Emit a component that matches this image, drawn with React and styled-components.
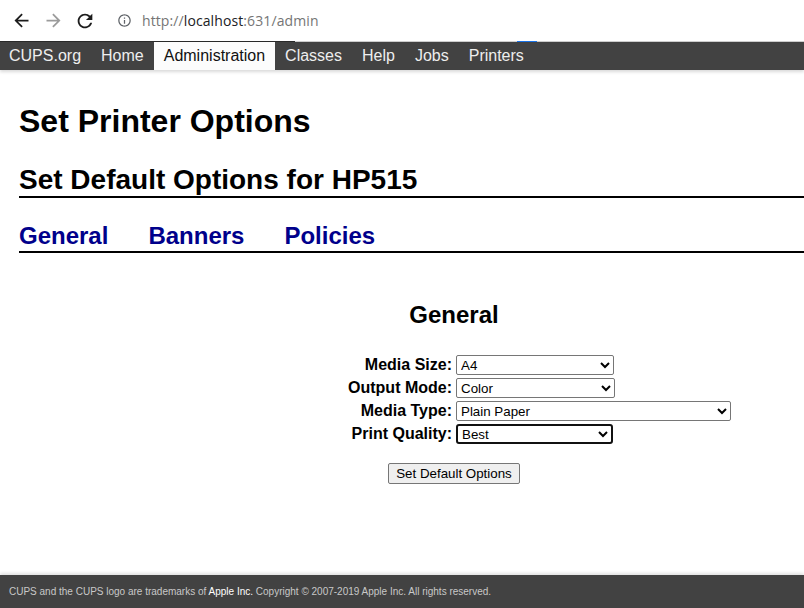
import React from "react";
import styled, { createGlobalStyle } from "styled-components";
import { MdArrowBack, MdArrowForward, MdRefresh, MdInfoOutline } from "react-icons/md";

const GlobalStyle = createGlobalStyle`
  html, body { margin: 0; padding: 0; background: #fff; }
  body { font-family: "Liberation Sans", Arial, sans-serif; color: #000; }
`;

const Page = styled.div`
  display: flex;
  flex-direction: column;
  min-height: 100vh;
`;

const Toolbar = styled.div`
  display: flex;
  align-items: center;
  height: 41px;
  padding-left: 5px;
  background: #fff;
`;

const IconSlot = styled.div`
  width: 32px;
  display: flex;
  justify-content: center;
  align-items: center;
  color: ${(p) => (p.$muted ? "#9b9b9b" : "#1c1c1c")};
`;

const InfoSlot = styled.div`
  display: flex;
  align-items: center;
  margin-left: 16px;
  color: #5f6368;
`;

const Url = styled.div`
  margin-left: 10px;
  font-family: "Open Sans", "Noto Sans", sans-serif;
  font-size: 14px;
  color: #757575;
  letter-spacing: 0.1px;
`;

const Host = styled.span`
  color: #202124;
`;

const LoadBar = styled.div`
  height: 1px;
  background: linear-gradient(
    to right,
    #2a2a2a 0 295px,
    #cfcfcf 295px 517px,
    #1a73e8 517px 537px,
    #cfcfcf 537px
  );
`;

const Nav = styled.nav`
  display: flex;
  height: 28px;
  background: #424242;
  box-shadow: 0 2px 3px rgba(0, 0, 0, 0.15);
  position: relative;
  z-index: 1;
`;

const NavItem = styled.a`
  padding: 0 10px;
  line-height: 28px;
  font-size: 16px;
  text-decoration: none;
  color: ${(p) => (p.$active ? "#111" : "#eeeeee")};
  background: ${(p) => (p.$active ? "#fcfcfc" : "transparent")};
  &:first-child { margin-left: -1px; }
`;

const Main = styled.main`
  flex: 1;
  padding-left: 19px;
`;

const Title = styled.h1`
  margin: 33px 0 0;
  font-size: 32px;
  line-height: 37px;
  font-weight: bold;
`;

const Subtitle = styled.h2`
  margin: 24px 0 0;
  font-size: 28px;
  line-height: 32px;
  font-weight: bold;
  border-bottom: 2px solid #000;
`;

const Tabs = styled.div`
  display: flex;
  gap: 40px;
  margin-top: 24px;
  padding-bottom: 1px;
  border-bottom: 2px solid #000;
`;

const Tab = styled.a`
  font-size: 24px;
  line-height: 28px;
  font-weight: bold;
  color: #00008b;
  text-decoration: none;
`;

const Section = styled.section`
  margin-top: 48px;
  padding-left: 85px;
`;

const SectionTitle = styled.h3`
  margin: 0;
  text-align: center;
  font-size: 24px;
  line-height: 28px;
  font-weight: bold;
`;

const OptionsGrid = styled.div`
  display: grid;
  grid-template-columns: 1fr 1fr;
  column-gap: 4px;
  row-gap: 3px;
  margin-top: 26px;
  align-items: center;
`;

const Label = styled.label`
  text-align: right;
  font-size: 16px;
  line-height: 20px;
  font-weight: bold;
`;

const Select = styled.select`
  width: ${(p) => p.$w}px;
  height: 20px;
  box-sizing: border-box;
  font-family: "Liberation Sans", Arial, sans-serif;
  font-size: 13.33px;
  color: #000;
  background: #fff;
  border: ${(p) => (p.$focused ? "2px solid #111" : "1px solid #767676")};
  border-radius: ${(p) => (p.$focused ? "3px" : "2px")};
  padding: 0;
  outline: none;
`;

const ButtonRow = styled.div`
  display: flex;
  justify-content: center;
  margin-top: 19px;
`;

const Button = styled.button`
  height: 21px;
  padding: 0 7px;
  font-family: "Liberation Sans", Arial, sans-serif;
  font-size: 13.33px;
  color: #000;
  background: #efefef;
  border: 1px solid #767676;
  border-radius: 2px;
`;

const Footer = styled.footer`
  background: #424242;
  padding: 10px 9px;
  line-height: 13px;
  font-size: 10px;
  color: #c8c8c8;
  box-shadow: 0 -2px 3px rgba(0, 0, 0, 0.12);
`;

const FooterLink = styled.a`
  color: #fff;
  text-decoration: none;
`;

const options = [
  { label: "Media Size:", value: "A4", w: 158 },
  { label: "Output Mode:", value: "Color", w: 159 },
  { label: "Media Type:", value: "Plain Paper", w: 275 },
  { label: "Print Quality:", value: "Best", w: 157, focused: true },
];

export default function App() {
  return (
    <Page>
      <GlobalStyle />
      <Toolbar>
        <IconSlot><MdArrowBack size={21} /></IconSlot>
        <IconSlot $muted><MdArrowForward size={21} /></IconSlot>
        <IconSlot><MdRefresh size={22} /></IconSlot>
        <InfoSlot><MdInfoOutline size={15} /></InfoSlot>
        <Url>
          http://<Host>localhost</Host>:631/admin
        </Url>
      </Toolbar>
      <LoadBar />
      <Nav>
        <NavItem>CUPS.org</NavItem>
        <NavItem>Home</NavItem>
        <NavItem $active>Administration</NavItem>
        <NavItem>Classes</NavItem>
        <NavItem>Help</NavItem>
        <NavItem>Jobs</NavItem>
        <NavItem>Printers</NavItem>
      </Nav>
      <Main>
        <Title>Set Printer Options</Title>
        <Subtitle>Set Default Options for HP515</Subtitle>
        <Tabs>
          <Tab>General</Tab>
          <Tab>Banners</Tab>
          <Tab>Policies</Tab>
        </Tabs>
        <Section>
          <SectionTitle>General</SectionTitle>
          <OptionsGrid>
            {options.map((o) => (
              <React.Fragment key={o.label}>
                <Label>{o.label}</Label>
                <div>
                  <Select $w={o.w} $focused={o.focused} defaultValue={o.value}>
                    <option>{o.value}</option>
                  </Select>
                </div>
              </React.Fragment>
            ))}
          </OptionsGrid>
          <ButtonRow>
            <Button>Set Default Options</Button>
          </ButtonRow>
        </Section>
      </Main>
      <Footer>
        CUPS and the CUPS logo are trademarks of <FooterLink>Apple Inc.</FooterLink> Copyright © 2007-2019 Apple Inc. All rights reserved.
      </Footer>
    </Page>
  );
}
